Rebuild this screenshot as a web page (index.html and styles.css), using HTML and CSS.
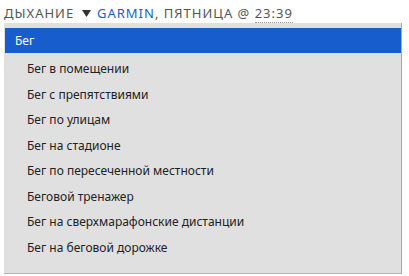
FILE: index.html
```html
<!DOCTYPE html>
<html>
<head>
    <title>Дыхание</title>
    <link rel="stylesheet" href="styles.css">
</head>
<body>
    <div id="header">
        ДЫХАНИЕ <svg class="arrow" width="9" height="7" viewBox="0 0 9 7"><path d="M0 0 H9 L4.5 7 Z" fill="#333"/></svg> <a class="source" href="#">GARMIN</a>, ПЯТНИЦА @ <span class="time">23:39</span>
    </div>

    <div id="dropdown">
        <ul class="options">
            <li class="option selected">Бег</li>
            <li class="option">Бег в помещении</li>
            <li class="option">Бег с препятствиями</li>
            <li class="option">Бег по улицам</li>
            <li class="option">Бег на стадионе</li>
            <li class="option">Бег по пересеченной местности</li>
            <li class="option">Беговой тренажер</li>
            <li class="option">Бег на сверхмарафонские дистанции</li>
            <li class="option">Бег на беговой дорожке</li>
        </ul>
    </div>
</body>
</html>
```

FILE: styles.css
```css
body {
    font-family: "Noto Sans", "Open Sans", sans-serif;
    margin: 0;
    padding: 0;
    background-color: #ffffff;
}

#header {
    height: 23px;
    padding-left: 4px;
    font-size: 13px;
    line-height: 26px;
    letter-spacing: 1px;
    color: #555;
    white-space: nowrap;
}

.arrow {
    margin: 0 2px 1px 3px;
}

.source {
    color: #1a5ecc;
    text-decoration: none;
}

.time {
    border-bottom: 1px dotted #999;
}

#dropdown {
    margin-left: 4px;
    width: 397px;
    background-color: #e0e0e0;
    border-right: 1px solid #a9a9a9;
    border-bottom: 1px solid #b5b5b5;
    padding-top: 5px;
    padding-bottom: 13px;
}

.options {
    list-style: none;
    margin: 0;
    padding: 0;
}

.option {
    height: 25.5px;
    line-height: 25px;
    padding-left: 23px;
    font-size: 12px;
    color: #222;
}

.option.selected {
    height: 25px;
    margin-left: 1px;
    margin-bottom: 3px;
    padding-left: 10px;
    background-color: #175dcd;
    color: #fff;
}
```
